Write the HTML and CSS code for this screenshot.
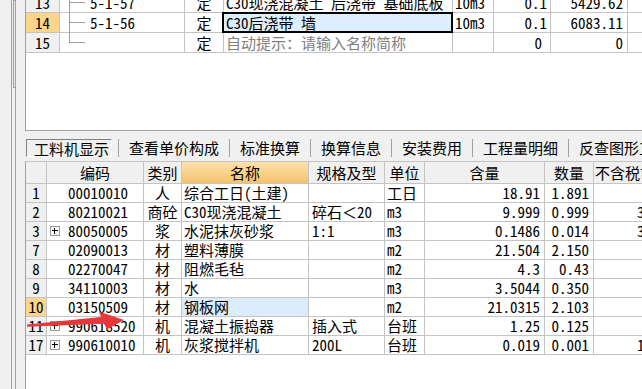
FILE: index.html
```html
<!DOCTYPE html>
<html lang="zh-CN">
<head>
<meta charset="utf-8">
<title>工料机显示</title>
<link rel="stylesheet" href="styles.css">
</head>
<body>
<div class="app">
  <div class="side"><div class="side-thumb"></div></div>
  <div class="main">
    <div class="top">
      <div class="top-rows">
        <div class="trow">
          <div class="c rh">13</div>
          <div class="c tree">5-1-57</div>
          <div class="c ctr">定</div>
          <div class="c">C30现浇混凝土 后浇带 基础底板</div>
          <div class="c">10m3</div>
          <div class="c num">0.1</div>
          <div class="c num">5429.62</div>
          <div class="c"></div>
        </div>
        <div class="trow">
          <div class="c rh cur">14</div>
          <div class="c tree">5-1-56</div>
          <div class="c ctr">定</div>
          <div class="c sel">C30后浇带 墙</div>
          <div class="c">10m3</div>
          <div class="c num">0.1</div>
          <div class="c num">6083.11</div>
          <div class="c"></div>
        </div>
        <div class="trow">
          <div class="c rh">15</div>
          <div class="c tree last"></div>
          <div class="c ctr">定</div>
          <div class="c hint">自动提示：请输入名称简称</div>
          <div class="c"></div>
          <div class="c num zero">0</div>
          <div class="c num">0</div>
          <div class="c"></div>
        </div>
      </div>
    </div>

    <div class="tabs">
      <div class="tab active">工料机显示</div>
      <div class="tab">查看单价构成</div>
      <div class="tab">标准换算</div>
      <div class="tab">换算信息</div>
      <div class="tab">安装费用</div>
      <div class="tab">工程量明细</div>
      <div class="tab">反查图形工程量</div>
    </div>

    <div class="bottom">
      <div class="brow head">
        <div class="c"></div>
        <div class="c ctr">编码</div>
        <div class="c ctr">类别</div>
        <div class="c ctr hot">名称</div>
        <div class="c ctr">规格及型</div>
        <div class="c ctr">单位</div>
        <div class="c ctr">含量</div>
        <div class="c ctr">数量</div>
        <div class="c ctr">不含税市场价</div>
      </div>
      <div class="brow">
        <div class="c rh">1</div>
        <div class="c code"><span class="exp none"></span>00010010</div>
        <div class="c ctr">人</div>
        <div class="c">综合工日(土建)</div>
        <div class="c"></div>
        <div class="c">工日</div>
        <div class="c num">18.91</div>
        <div class="c num">1.891</div>
        <div class="c num"></div>
      </div>
      <div class="brow">
        <div class="c rh">2</div>
        <div class="c code"><span class="exp none"></span>80210021</div>
        <div class="c ctr">商砼</div>
        <div class="c">C30现浇混凝土</div>
        <div class="c spec">碎石＜20</div>
        <div class="c">m3</div>
        <div class="c num">9.999</div>
        <div class="c num">0.999</div>
        <div class="c num">392.23</div>
      </div>
      <div class="brow">
        <div class="c rh">3</div>
        <div class="c code"><span class="exp"></span>80050005</div>
        <div class="c ctr">浆</div>
        <div class="c">水泥抹灰砂浆</div>
        <div class="c spec">1:1</div>
        <div class="c">m3</div>
        <div class="c num">0.1486</div>
        <div class="c num">0.014</div>
        <div class="c num">355.04</div>
      </div>
      <div class="brow">
        <div class="c rh">7</div>
        <div class="c code"><span class="exp none"></span>02090013</div>
        <div class="c ctr">材</div>
        <div class="c">塑料薄膜</div>
        <div class="c"></div>
        <div class="c">m2</div>
        <div class="c num">21.504</div>
        <div class="c num">2.150</div>
        <div class="c num"></div>
      </div>
      <div class="brow">
        <div class="c rh">8</div>
        <div class="c code"><span class="exp none"></span>02270047</div>
        <div class="c ctr">材</div>
        <div class="c">阻燃毛毡</div>
        <div class="c"></div>
        <div class="c">m2</div>
        <div class="c num">4.3</div>
        <div class="c num">0.43</div>
        <div class="c num"></div>
      </div>
      <div class="brow">
        <div class="c rh">9</div>
        <div class="c code"><span class="exp none"></span>34110003</div>
        <div class="c ctr">材</div>
        <div class="c">水</div>
        <div class="c"></div>
        <div class="c">m3</div>
        <div class="c num">3.5044</div>
        <div class="c num">0.350</div>
        <div class="c num"></div>
      </div>
      <div class="brow">
        <div class="c rh cur">10</div>
        <div class="c code"><span class="exp none"></span>03150509</div>
        <div class="c ctr">材</div>
        <div class="c pick">钢板网</div>
        <div class="c"></div>
        <div class="c">m2</div>
        <div class="c num">21.0315</div>
        <div class="c num">2.103</div>
        <div class="c num"></div>
      </div>
      <div class="brow">
        <div class="c rh">11</div>
        <div class="c code"><span class="exp"></span>990618520</div>
        <div class="c ctr">机</div>
        <div class="c">混凝土振捣器</div>
        <div class="c spec">插入式</div>
        <div class="c">台班</div>
        <div class="c num">1.25</div>
        <div class="c num">0.125</div>
        <div class="c num"></div>
      </div>
      <div class="brow">
        <div class="c rh">17</div>
        <div class="c code"><span class="exp"></span>990610010</div>
        <div class="c ctr">机</div>
        <div class="c">灰浆搅拌机</div>
        <div class="c spec">200L</div>
        <div class="c">台班</div>
        <div class="c num">0.019</div>
        <div class="c num">0.001</div>
        <div class="c num">158.22</div>
      </div>
    </div>
  </div>
  <svg class="arrow" width="140" height="40" viewBox="0 300 140 40" aria-hidden="true">
    <polygon points="27,324.6 101,317 99,311.4 124,320 107,329.4 104,323.8 27,326.8" fill="#e6373a"/>
  </svg>
</div>
</body>
</html>
```

FILE: styles.css
```css
* { box-sizing: border-box; }
html, body { margin: 0; padding: 0; }
body {
  width: 642px;
  height: 389px;
  overflow: hidden;
  background: #f0f0f0;
  color: #000;
  font-family: "Noto Sans Mono CJK SC", "Noto Sans CJK SC", "DejaVu Sans Mono", monospace;
  font-size: 15px;
}

.app {
  position: relative;
  display: flex;
  height: 389px;
}

/* left splitter strip */
.side {
  position: relative;
  width: 25px;
  flex: none;
  background: linear-gradient(90deg,
    transparent 11px, #a0a0a0 11px 12px,
    transparent 12px 15px, #a0a0a0 15px 16px,
    transparent 16px);
}
.side-thumb {
  position: absolute;
  left: 13px;
  top: 0;
  width: 3px;
  height: 88px;
  border: 1px solid #a0a0a0;
  border-right: none;
}

.main {
  flex: 1;
  min-width: 0;
  display: flex;
  flex-direction: column;
}

/* generic cell */
.c {
  border-right: 1px solid #c4c4c4;
  border-bottom: 1px solid #c4c4c4;
  padding: 0 2px;
  white-space: nowrap;
}
.ctr { text-align: center; }
.num { text-align: right; padding-right: 3px; }
.rh { background: #f0f0f0; text-align: center; padding: 0; }
.rh.cur { background: #fdd48c; }

/* top grid */
.top {
  height: 131px;
  flex: none;
  background: #fff;
  border-left: 1px solid #a0a0a0;
  border-bottom: 1px solid #a0a0a0;
  overflow: hidden;
}
.top-rows { margin-top: -7px; }
.trow {
  display: grid;
  grid-template-columns: 34px 125px 39px 229px 41px 57px 77px 40px;
  width: max-content;
  height: 20px;
  line-height: 19px;
}
.trow .num:nth-child(7) { padding-right: 4px; }
.tree {
  position: relative;
  padding-left: 30px;
}
.tree::before {
  content: "";
  position: absolute;
  left: 9px;
  top: 0;
  bottom: -1px;
  width: 1px;
  background: #a0a0a0;
}
.tree.last::before { bottom: auto; height: 10px; }
.tree::after {
  content: "";
  position: absolute;
  left: 9px;
  top: 9px;
  width: 16px;
  height: 1px;
  background: #a0a0a0;
}
.sel {
  position: relative;
  background: #ddeefe;
}
.sel::after {
  content: "";
  position: absolute;
  left: -2px;
  top: -1px;
  right: -1px;
  bottom: -1px;
  border: 2px solid #000;
}
.hint { color: #808080; }
.zero { padding-right: 8px; }

/* tabs */
.tabs {
  height: 30px;
  flex: none;
  display: flex;
  align-items: flex-start;
  padding: 8px 0 0 1px;
  white-space: nowrap;
  overflow: hidden;
}
.tab {
  height: 18px;
  line-height: 17px;
  padding: 0 10px;
  border-left: 1px solid #a0a0a0;
  flex: none;
}
.tab.active {
  border: 1px solid;
  border-color: #808080 #ffffff #ffffff #808080;
  padding: 0 2px 0 7px;
  margin-right: 6px;
}

/* bottom grid */
.bottom {
  flex: 1;
  background: #fff;
  border-left: 1px solid #a0a0a0;
  border-top: 1px solid #c4c4c4;
  overflow: hidden;
}
.brow {
  display: grid;
  grid-template-columns: 21px 97px 38px 127px 76px 40px 120px 49px 93px;
  width: max-content;
  height: 19px;
  line-height: 18px;
}
.brow.head {
  height: 22px;
  line-height: 21px;
}
.brow.head .c { background: #f0f0f0; padding: 0; }
.brow.head .hot { background: linear-gradient(#fde2ab, #f4c26c); }
.brow .num { padding-right: 4px; }
.spec { padding-left: 3px; }
.pick { background: #ddecfc; }

.code {
  display: flex;
  align-items: center;
  padding-left: 3px;
}
.exp {
  position: relative;
  flex: none;
  width: 10px;
  height: 10px;
  margin-right: 8px;
  border: 1px solid #9a9a9a;
  background: #f6f6f6;
}
.exp::before {
  content: "";
  position: absolute;
  left: 1px;
  top: 3px;
  width: 6px;
  height: 1px;
  background: #000;
}
.exp::after {
  content: "";
  position: absolute;
  left: 3px;
  top: 1px;
  width: 1px;
  height: 6px;
  background: #000;
}
.exp.none { border-color: transparent; background: none; }
.exp.none::before, .exp.none::after { display: none; }

.arrow {
  position: absolute;
  left: 0;
  top: 300px;
}
```
